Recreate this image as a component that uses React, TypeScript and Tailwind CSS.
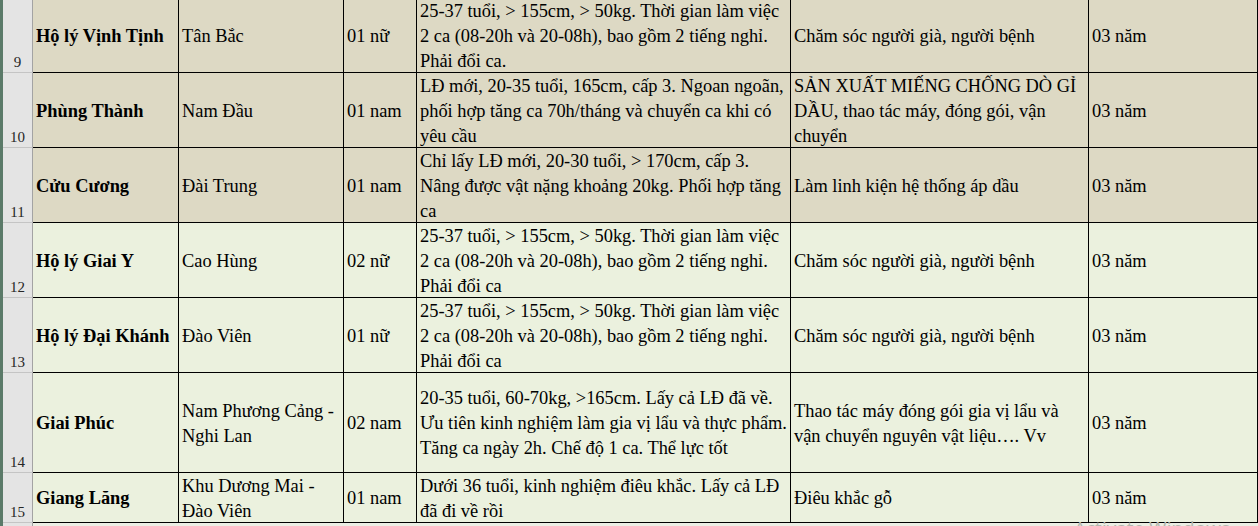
import React from 'react';

type Row = {
  num: number;
  height: string;
  bg: string;
  name: string;
  place: string[];
  count: string;
  req: string[];
  job: string[];
  term: string;
};

const TAN = 'bg-[#ddd9c4]';
const GREEN = 'bg-[#ebf1de]';

const rows: Row[] = [
  {
    num: 9,
    height: 'h-[74px]',
    bg: TAN,
    name: 'Hộ lý Vịnh Tịnh',
    place: ['Tân Bắc'],
    count: '01 nữ',
    req: [
      '25-37 tuổi, > 155cm, > 50kg. Thời gian làm việc',
      '2 ca (08-20h và 20-08h), bao gồm 2 tiếng nghỉ.',
      'Phải đổi ca.',
    ],
    job: ['Chăm sóc người già, người bệnh'],
    term: '03 năm',
  },
  {
    num: 10,
    height: 'h-[75px]',
    bg: TAN,
    name: 'Phùng Thành',
    place: ['Nam Đầu'],
    count: '01 nam',
    req: [
      'LĐ mới, 20-35 tuổi, 165cm, cấp 3. Ngoan ngoãn,',
      'phối hợp tăng ca 70h/tháng và chuyển ca khi có',
      'yêu cầu',
    ],
    job: ['SẢN XUẤT MIẾNG CHỐNG DÒ GỈ', 'DẦU, thao tác máy, đóng gói, vận', 'chuyển'],
    term: '03 năm',
  },
  {
    num: 11,
    height: 'h-[75px]',
    bg: TAN,
    name: 'Cửu Cương',
    place: ['Đài Trung'],
    count: '01 nam',
    req: [
      'Chỉ lấy LĐ mới, 20-30 tuổi, > 170cm, cấp 3.',
      'Nâng được vật nặng khoảng 20kg. Phối hợp tăng',
      'ca',
    ],
    job: ['Làm linh kiện hệ thống áp dầu'],
    term: '03 năm',
  },
  {
    num: 12,
    height: 'h-[75px]',
    bg: GREEN,
    name: 'Hộ lý Giai Y',
    place: ['Cao Hùng'],
    count: '02 nữ',
    req: [
      '25-37 tuổi, > 155cm, > 50kg. Thời gian làm việc',
      '2 ca (08-20h và 20-08h), bao gồm 2 tiếng nghỉ.',
      'Phải đổi ca',
    ],
    job: ['Chăm sóc người già, người bệnh'],
    term: '03 năm',
  },
  {
    num: 13,
    height: 'h-[75px]',
    bg: GREEN,
    name: 'Hộ lý Đại Khánh',
    place: ['Đào Viên'],
    count: '01 nữ',
    req: [
      '25-37 tuổi, > 155cm, > 50kg. Thời gian làm việc',
      '2 ca (08-20h và 20-08h), bao gồm 2 tiếng nghỉ.',
      'Phải đổi ca',
    ],
    job: ['Chăm sóc người già, người bệnh'],
    term: '03 năm',
  },
  {
    num: 14,
    height: 'h-[100px]',
    bg: GREEN,
    name: 'Giai Phúc',
    place: ['Nam Phương Cảng -', 'Nghi Lan'],
    count: '02 nam',
    req: [
      '20-35 tuổi, 60-70kg, >165cm. Lấy cả LĐ đã về.',
      'Ưu tiên kinh nghiệm làm gia vị lẩu và thực phẩm.',
      'Tăng ca ngày 2h. Chế độ 1 ca. Thể lực tốt',
    ],
    job: ['Thao tác máy đóng gói gia vị lẩu và', 'vận chuyển nguyên vật liệu…. Vv'],
    term: '03 năm',
  },
  {
    num: 15,
    height: 'h-[50px]',
    bg: GREEN,
    name: 'Giang Lăng',
    place: ['Khu Dương Mai -', 'Đào Viên'],
    count: '01 nam',
    req: ['Dưới 36 tuổi, kinh nghiệm điêu khắc. Lấy cả LĐ', 'đã đi về rồi'],
    job: ['Điêu khắc gỗ'],
    term: '03 năm',
  },
];

function Cell({
  width,
  lines,
  bold,
}: {
  width: string;
  lines: string[];
  bold?: boolean;
}): React.ReactElement {
  return (
    <div
      className={`${width} flex shrink-0 flex-col justify-center border-r border-b border-black px-[3px] pt-[2px] ${
        bold ? 'font-bold' : ''
      }`}
    >
      {lines.map((line) => (
        <span key={line} className="whitespace-nowrap">
          {line}
        </span>
      ))}
    </div>
  );
}

export default function App(): React.ReactElement {
  return (
    <div className="relative flex h-[526px] w-[1258px] overflow-hidden bg-[#eceee4] font-['Liberation_Serif','Times_New_Roman',serif] text-[18.4px] leading-[25px] text-black">
      {/* window frame edge */}
      <div className="w-[3px] shrink-0 bg-[#5b7a69]" />

      <div className="-mt-[1px] flex flex-1 flex-col">
        {rows.map((r) => (
          <div key={r.num} className={`flex ${r.height} ${r.bg}`}>
            <div className="flex w-[30px] shrink-0 items-end justify-center border-r border-b border-r-[#a3a3a3] border-b-[#c4c4c4] bg-[#e4e4e4] pb-[1px] text-[15px] leading-[18px] text-[#262626]">
              {r.num}
            </div>
            <Cell width="w-[146px]" lines={[r.name]} bold />
            <Cell width="w-[165px]" lines={r.place} />
            <Cell width="w-[73px]" lines={[r.count]} />
            <Cell width="w-[374px]" lines={r.req} />
            <Cell width="w-[298px]" lines={r.job} />
            <Cell width="w-[169px]" lines={[r.term]} />
          </div>
        ))}
        {/* partial row 16 */}
        <div className="flex flex-1">
          <div className="w-[30px] shrink-0 border-r border-[#a3a3a3] bg-[#e4e4e4]" />
          <div className="flex-1" />
        </div>
      </div>

      <span className="absolute left-[1074px] top-[519px] font-['Open_Sans',sans-serif] text-[19px] leading-none text-[#b4b6ae]">
        Activate Windows
      </span>
    </div>
  );
}
